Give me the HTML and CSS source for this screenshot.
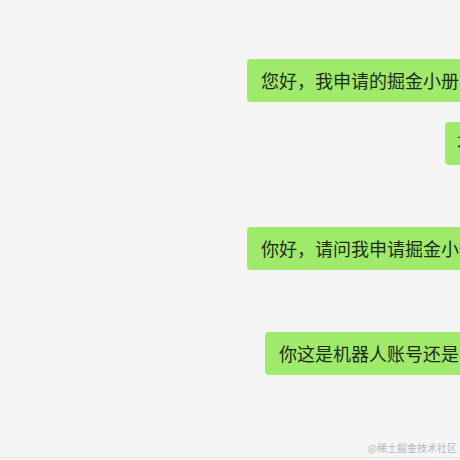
FILE: index.html
```html
<!DOCTYPE html>
<html lang="zh-CN">
<head>
    <meta charset="UTF-8">
    <meta name="viewport" content="width=device-width, initial-scale=1.0">
    <title>聊天</title>
    <link rel="stylesheet" href="styles.css">
</head>
<body>
    <div class="chat">
        <div class="msg msg-1"><div class="bubble">您好，我申请的掘金小册为什么还没有通过审核</div></div>
        <div class="msg msg-2"><div class="bubble">不</div></div>
        <div class="msg msg-3"><div class="bubble">你好，请问我申请掘金小册什么时候可以通过</div></div>
        <div class="msg msg-4"><div class="bubble">你这是机器人账号还是真人</div></div>
    </div>
    <div class="footer">
        <span class="mark">@稀土掘金技术社区</span>
    </div>
</body>
</html>
```

FILE: styles.css
```css
html, body {
    margin: 0;
    padding: 0;
}

body {
    width: 460px;
    height: 460px;
    overflow: hidden;
    background-color: #f5f5f5;
    font-family: "Noto Sans CJK SC", "Liberation Sans", sans-serif;
    color: #1f2a1a;
    position: relative;
}

.chat {
    padding-top: 59px;
}

.msg {
    display: flex;
    white-space: nowrap;
    overflow: hidden;
}

.bubble {
    background-color: #9fea6b;
    border-radius: 4px;
    padding: 10px 14px;
    font-size: 18px;
    line-height: 23px;
    height: 23px;
}

.msg-1 { padding-left: 247px; }
.msg-2 { padding-left: 445px; margin-top: 20px; }
.msg-2 .bubble { padding-left: 12px; }
.msg-3 { padding-left: 247px; margin-top: 62px; }
.msg-4 { padding-left: 265px; margin-top: 62px; }

.footer {
    position: absolute;
    left: 0;
    right: 0;
    bottom: 2px;
    height: 16px;
    border-bottom: 1px solid #e6e6e6;
    display: flex;
    justify-content: flex-end;
    align-items: center;
}

.mark {
    font-size: 10px;
    line-height: 12px;
    color: #b8b8b8;
    padding-right: 3px;
    padding-bottom: 2px;
}
```
